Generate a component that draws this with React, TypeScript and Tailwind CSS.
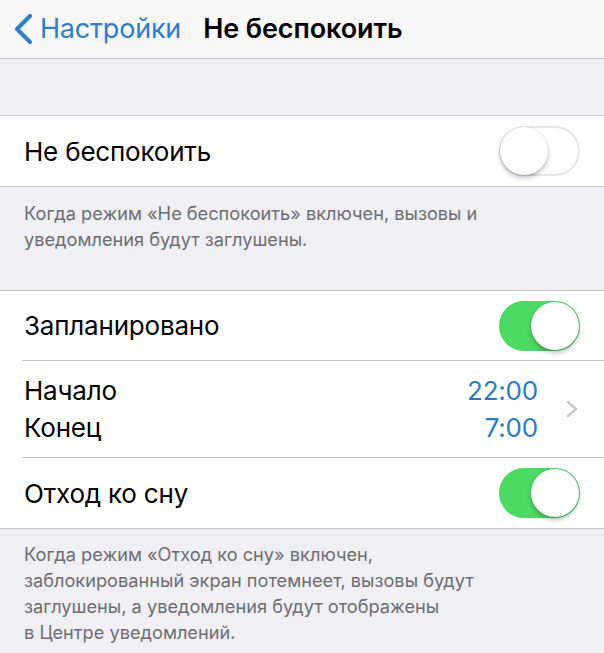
import { useState } from "react";

function Toggle({ on, onChange }: { on: boolean; onChange: () => void }) {
  return (
    <button
      onClick={onChange}
      className={`relative h-[50px] w-[81px] shrink-0 rounded-full border-2 transition-colors ${
        on ? "border-[#4cd964] bg-[#4cd964]" : "border-[#e5e5ea] bg-white"
      }`}
    >
      <span
        className={`absolute top-[-1px] h-[48px] w-[48px] rounded-full bg-white shadow-[0_3px_4px_rgba(0,0,0,0.25),0_0_0_1px_rgba(0,0,0,0.06)] transition-all ${
          on ? "left-[30px]" : "left-[-1px]"
        }`}
      />
    </button>
  );
}

export default function App() {
  const [dnd, setDnd] = useState(false);
  const [scheduled, setScheduled] = useState(true);
  const [bedtime, setBedtime] = useState(true);

  return (
    <div className="h-[653px] w-[604px] overflow-hidden bg-[#efeff4] font-['Inter',sans-serif] text-black">
      {/* Nav bar */}
      <div className="flex h-[59px] items-center border-b border-[#c8c7cc] bg-[#f7f7f8]">
        <div className="flex items-center pl-[12px] text-[#2f7dc4]">
          <svg width="22" height="30" viewBox="0 0 22 30" fill="none">
            <path d="M18 2 L5 15 L18 28" stroke="currentColor" strokeWidth="4" strokeLinecap="round" strokeLinejoin="round" />
          </svg>
          <span className="ml-[6px] text-[27px] tracking-[-0.2px]">Настройки</span>
        </div>
        <span className="ml-[22px] text-[27px] font-semibold tracking-[-0.1px]">Не беспокоить</span>
      </div>

      <div className="h-[56px]" />

      {/* Do not disturb */}
      <div className="flex h-[72px] items-center justify-between border-y border-[#c8c7cc] bg-white px-[24px]">
        <span className="text-[26px] tracking-[-0.2px]">Не беспокоить</span>
        <Toggle on={dnd} onChange={() => setDnd(!dnd)} />
      </div>
      <div className="h-[103px] px-[24px] pt-[13px] text-[18.2px] leading-[26px] text-[#6d6d72]">
        Когда режим «Не беспокоить» включен, вызовы и
        <br />
        уведомления будут заглушены.
      </div>

      {/* Schedule */}
      <div className="border-y border-[#c8c7cc] bg-white">
        <div className="flex h-[69px] items-center justify-between px-[24px]">
          <span className="text-[26px] tracking-[-0.2px]">Запланировано</span>
          <Toggle on={scheduled} onChange={() => setScheduled(!scheduled)} />
        </div>
        <div className="ml-[22px] border-t border-[#c8c7cc]" />
        <div className="flex h-[96px] items-center pl-[24px] pr-[26px]">
          <div className="flex flex-1 flex-col gap-[8px] text-[26px] leading-[29px] tracking-[-0.2px]">
            <div className="flex justify-between">
              <span>Начало</span>
              <span className="text-[#2c7bc2]">22:00</span>
            </div>
            <div className="flex justify-between">
              <span>Конец</span>
              <span className="text-[#2c7bc2]">7:00</span>
            </div>
          </div>
          <svg className="ml-[28px]" width="12" height="18" viewBox="0 0 12 18" fill="none">
            <path d="M2 2 L10 9 L2 16" stroke="#c7c7cc" strokeWidth="2.5" strokeLinecap="round" strokeLinejoin="round" />
          </svg>
        </div>
        <div className="ml-[22px] border-t border-[#c8c7cc]" />
        <div className="flex h-[70px] items-center justify-between px-[24px]">
          <span className="text-[26px] tracking-[-0.2px]">Отход ко сну</span>
          <Toggle on={bedtime} onChange={() => setBedtime(!bedtime)} />
        </div>
      </div>
      <div className="px-[24px] pt-[12px] text-[18.2px] leading-[26px] text-[#6d6d72]">
        Когда режим «Отход ко сну» включен,
        <br />
        заблокированный экран потемнеет, вызовы будут
        <br />
        заглушены, а уведомления будут отображены
        <br />в Центре уведомлений.
      </div>
    </div>
  );
}
